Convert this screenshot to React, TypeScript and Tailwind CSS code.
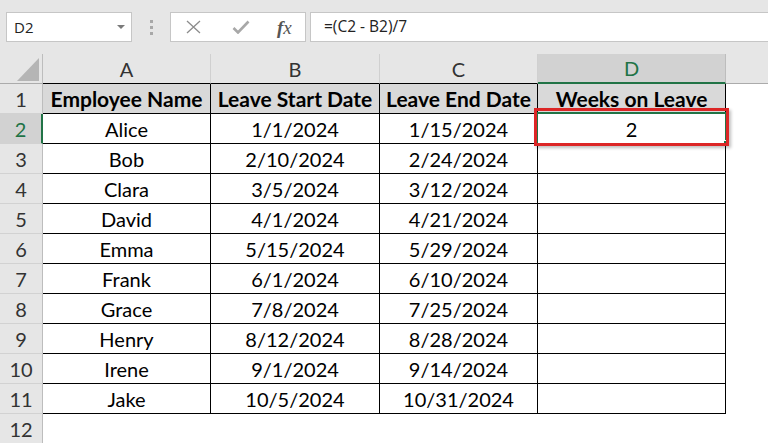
import React from "react";

const rows: [string, string, string][] = [
  ["Alice", "1/1/2024", "1/15/2024"],
  ["Bob", "2/10/2024", "2/24/2024"],
  ["Clara", "3/5/2024", "3/12/2024"],
  ["David", "4/1/2024", "4/21/2024"],
  ["Emma", "5/15/2024", "5/29/2024"],
  ["Frank", "6/1/2024", "6/10/2024"],
  ["Grace", "7/8/2024", "7/25/2024"],
  ["Henry", "8/12/2024", "8/28/2024"],
  ["Irene", "9/1/2024", "9/14/2024"],
  ["Jake", "10/5/2024", "10/31/2024"],
];

const rowHead =
  "h-[30px] bg-[#e6e6e6] border-r border-b border-r-[#bdbdbd] border-b-[#d2d2d2] flex items-center justify-center text-[20px] text-[#333]";
const cell =
  "h-[30px] border-r border-b border-black flex items-center justify-center text-[20px] text-black";
const headCell =
  "h-[30px] border-r border-b border-black bg-[#d9d9d9] flex items-center justify-center text-[21px] font-bold text-black whitespace-nowrap";

export default function App() {
  return (
    <div
      className="w-[768px] h-[443px] bg-white overflow-hidden relative"
      style={{ fontFamily: "Lato, 'Noto Sans', sans-serif" }}
    >
      {/* Formula bar */}
      <div
        className="h-[54px] bg-[#e6e6e6] flex items-start pt-[12px]"
        style={{ fontFamily: "'Open Sans', 'Noto Sans', sans-serif" }}
      >
        <div className="ml-[6px] w-[126px] h-[30px] bg-white border border-[#c6c6c6] flex items-center pl-[7px] pr-[6px]">
          <span className="text-[15px] text-[#222] flex-1">D2</span>
          <span className="w-0 h-0 border-l-[4px] border-r-[4px] border-t-[4px] border-l-transparent border-r-transparent border-t-[#7a7a7a]" />
        </div>
        <div className="w-[38px] h-[30px] flex flex-col items-center justify-center gap-[3px]">
          <span className="w-[3px] h-[3px] bg-[#a8a8a8]" />
          <span className="w-[3px] h-[3px] bg-[#a8a8a8]" />
          <span className="w-[3px] h-[3px] bg-[#a8a8a8]" />
        </div>
        <div className="w-[136px] h-[30px] bg-white border border-[#c6c6c6] flex items-center">
          <svg width="18" height="14" viewBox="0 0 18 14" className="ml-[14px]">
            <path d="M2 1 L15 13 M15 1 L2 13" stroke="#8c8c8c" strokeWidth="1.3" fill="none" />
          </svg>
          <svg width="18" height="14" viewBox="0 0 18 14" className="ml-[29px]">
            <path d="M1.5 8 L6 12.5 L16.5 1.5" stroke="#a8a8a8" strokeWidth="2.6" fill="none" />
          </svg>
          <span
            className="ml-[27px] text-[19px] italic text-[#555] leading-none"
            style={{ fontFamily: "'Liberation Serif', 'DejaVu Serif', serif" }}
          >
            <span className="font-bold">f</span>x
          </span>
        </div>
        <div className="ml-[4px] flex-1 h-[30px] bg-white border border-[#c6c6c6] border-r-0 flex items-center pl-[13px]">
          <span className="text-[15.5px] text-[#222]">=(C2 - B2)/7</span>
        </div>
      </div>

      {/* Sheet */}
      <div className="grid grid-cols-[43px_168px_169px_158px_188px_1fr]">
        {/* Column headers */}
        <div className="h-[30px] bg-[#e6e6e6] border-r border-b border-r-[#bdbdbd] border-b-[#ababab] relative">
          <svg width="43" height="30" viewBox="0 0 43 30" className="absolute left-0 top-0">
            <polygon points="17,27 39,27 39,4" fill="#b5b5b5" />
          </svg>
        </div>
        <div className="h-[30px] bg-[#e6e6e6] border-r border-b border-r-[#d0d0d0] border-b-black flex items-center justify-center text-[20px] text-[#333]">A</div>
        <div className="h-[30px] bg-[#e6e6e6] border-r border-b border-r-[#d0d0d0] border-b-black flex items-center justify-center text-[20px] text-[#333]">B</div>
        <div className="h-[30px] bg-[#e6e6e6] border-r border-b border-r-[#d0d0d0] border-b-black flex items-center justify-center text-[20px] text-[#333]">C</div>
        <div className="h-[30px] bg-[#d2d2d2] border-r border-b-2 border-r-[#bdbdbd] border-b-[#217346] flex items-center justify-center text-[20px] text-[#217346]">D</div>
        <div className="h-[30px] bg-[#e6e6e6] border-b border-b-[#ababab]" />

        {/* Row 1 */}
        <div className={rowHead}>1</div>
        <div className={headCell}>Employee Name</div>
        <div className={headCell}>Leave Start Date</div>
        <div className={headCell}>Leave End Date</div>
        <div className={headCell}>Weeks on Leave</div>
        <div className="h-[30px]" />

        {rows.map((r, i) => (
          <React.Fragment key={i}>
            <div
              className={
                i === 0
                  ? "h-[30px] bg-[#d2d2d2] border-r-2 border-b border-r-[#217346] border-b-[#d2d2d2] flex items-center justify-center text-[20px] text-[#217346]"
                  : rowHead
              }
            >
              {i + 2}
            </div>
            <div className={cell}>{r[0]}</div>
            <div className={cell}>{r[1]}</div>
            <div className={cell}>{r[2]}</div>
            <div className={cell}>{i === 0 ? "2" : ""}</div>
            <div className="h-[30px]" />
          </React.Fragment>
        ))}

        {/* Row 12 */}
        <div className={rowHead}>12</div>
        <div className="h-[30px]" />
        <div className="h-[30px]" />
        <div className="h-[30px]" />
        <div className="h-[30px]" />
        <div className="h-[30px]" />
      </div>

      {/* Selection of D2 */}
      <div className="absolute left-[536px] top-[112px] w-[191px] h-[33px] border-2 border-[#217346] pointer-events-none" />
      <div className="absolute left-[723px] top-[140px] w-[6px] h-[6px] bg-[#217346] border border-white pointer-events-none" />
      {/* Red annotation box */}
      <div className="absolute left-[534px] top-[108px] w-[195px] h-[38px] border-[3px] border-[#dc2626] shadow-[2px_2px_3px_rgba(0,0,0,0.25)] pointer-events-none" />
    </div>
  );
}
